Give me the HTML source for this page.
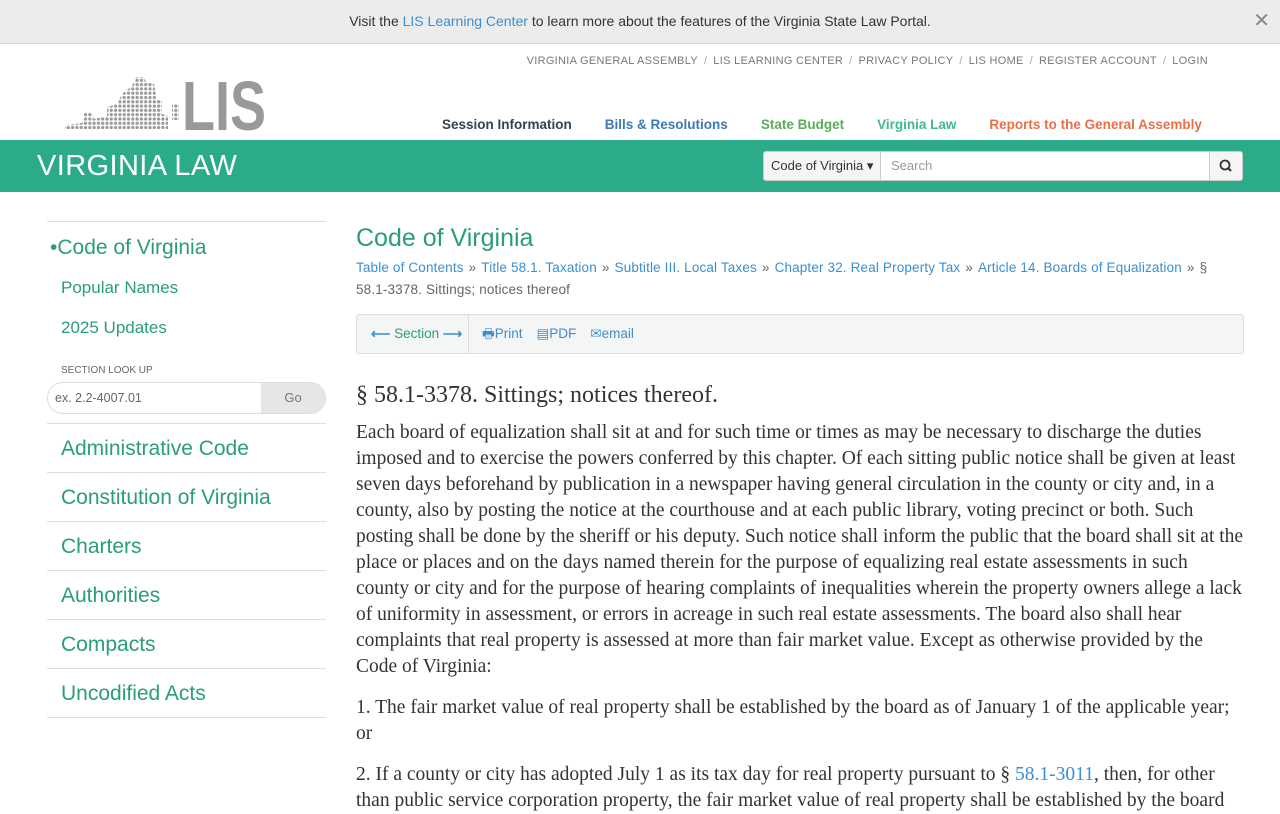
<!DOCTYPE html>
<html><head><meta charset="utf-8"><style>
*{box-sizing:border-box;margin:0;padding:0}
body{width:1280px;height:800px;overflow:hidden;font-family:"Liberation Sans",sans-serif;background:#fff;color:#333}
a{text-decoration:none}
.banner{height:44px;background:#ececec;border-bottom:1px solid #d6d6d6;text-align:center;font-size:14px;line-height:43px;color:#333;position:relative}
.banner a{color:#3a8fd0}
.banner .x{position:absolute;right:10px;top:0;font-size:20px;color:#888}
.top{position:absolute;top:55px;right:72px;font-size:11px;color:#777;letter-spacing:.3px}
.top span{margin:0 6px;color:#aaa}
.nav{position:absolute;top:117px;left:442px;font-size:13.5px;font-weight:bold;white-space:nowrap}
.nav a{margin-right:33px}
.band{position:absolute;top:140px;left:0;width:1280px;height:52px;background:#2cab8b}
.band h1{position:absolute;left:37px;top:10px;font-weight:normal;font-size:29px;color:#fff;letter-spacing:.4px}
.search{position:absolute;left:763px;top:11px;height:30px;width:480px;display:flex;border-radius:3px;overflow:hidden;background:#fff;border:1px solid #ccc}
.search .dd{width:117px;border-right:1px solid #ccc;background:#f5f5f5;font-size:13px;line-height:28px;padding-left:7px;color:#333}
.search .in{flex:1;font-size:13px;line-height:28px;padding-left:10px;color:#999}
.search .btn{width:33px;border-left:1px solid #ccc;background:#f5f5f5}
.side{position:absolute;left:47px;top:221px;width:279px}
.side .l{font-size:17px;color:#2a9d7a;padding-left:14px}
.big{display:block;border-bottom:1px solid #ddd;height:49px;line-height:49px;font-size:21px;color:#2a9d7a;padding-left:14px}
.main{position:absolute;left:356px;top:224px;width:888px}
.main h2{font-weight:normal;font-size:25px;color:#2a9d7a}
.bc{font-size:13.5px;color:#3a8fd0;line-height:22px;margin-top:4px;letter-spacing:.15px}
.bc span{color:#666;margin:0 5px}
.tb{margin-top:13px;height:40px;border:1px solid #ddd;border-radius:3px;background:#f4f5f5;font-size:13.5px;line-height:38px;display:flex}
.tb .s{width:112px;border-right:1px solid #ddd;padding-left:14px;color:#2a9d7a}
.tb .s b{color:#3a8fd0}
.tb .r{padding-left:13px;color:#3a8fd0}
.tb .r a{color:#3a8fd0;margin-right:14px}
h3{font-family:"Liberation Serif",serif;font-weight:normal;font-size:24px;margin-top:28px;color:#333}
p{font-family:"Liberation Serif",serif;font-size:19.5px;line-height:26px;margin-top:11px;color:#333}
p a{color:#3a8fd0}
</style></head><body>
<div class="banner">Visit the <a>LIS Learning Center</a> to learn more about the features of the Virginia State Law Portal.<span class="x">✕</span></div>
<svg style="position:absolute;left:62px;top:74px" width="206" height="58">
<defs><pattern id="d" width="4.3" height="4.3" patternUnits="userSpaceOnUse"><circle cx="2" cy="2" r="1.6" fill="#999"/></pattern></defs>
<polygon fill="url(#d)" points="3,55 3,51 20,49 22,38 30,38 32,45 45,42 45,33 55,30 60,20 70,12 74,3 82,3 84,8 92,10 95,25 100,27 100,40 106,42 106,55"/>
<rect x="110" y="30" width="7" height="16" fill="url(#d)"/>
<text x="120" y="56" font-family="Liberation Sans" font-weight="bold" font-size="70" fill="#999" textLength="84" lengthAdjust="spacingAndGlyphs">LIS</text>
</svg>
<div class="top">VIRGINIA GENERAL ASSEMBLY<span>/</span>LIS LEARNING CENTER<span>/</span>PRIVACY POLICY<span>/</span>LIS HOME<span>/</span>REGISTER ACCOUNT<span>/</span>LOGIN</div>
<div class="nav"><a style="color:#34434f">Session Information</a><a style="color:#3a7ab5">Bills &amp; Resolutions</a><a style="color:#5aad5a">State Budget</a><a style="color:#3cba92">Virginia Law</a><a style="color:#e5704b">Reports to the General Assembly</a></div>
<div class="band"><h1>VIRGINIA LAW</h1>
<div class="search"><div class="dd">Code of Virginia ▾</div><div class="in">Search</div><div class="btn"><svg width="33" height="28"><circle cx="15" cy="13" r="4.5" fill="none" stroke="#333" stroke-width="1.8"/><line x1="18.5" y1="16.5" x2="21" y2="19" stroke="#333" stroke-width="2"/></svg></div></div></div>
<div class="side">
<div style="border-top:1px solid #ddd;padding-top:14px"><div class="l" style="font-size:21px;padding-left:3px;height:28px">•Code of Virginia</div>
<div class="l" style="margin-top:14px;height:28px">Popular Names</div>
<div class="l" style="margin-top:12px;height:28px">2025 Updates</div>
<div style="font-size:10px;color:#666;margin:19px 0 6px 14px">SECTION LOOK UP</div>
<div style="display:flex;height:32px;border:1px solid #ddd;border-radius:16px;overflow:hidden;margin-bottom:9px"><div style="flex:1;font-size:12.5px;color:#666;line-height:30px;padding-left:7px">ex. 2.2-4007.01</div><div style="width:64px;background:#e6e6e6;color:#777;font-size:13px;text-align:center;line-height:30px">Go</div></div></div>
<div style="border-top:1px solid #ddd"></div>
<a class="big">Administrative Code</a><a class="big">Constitution of Virginia</a><a class="big">Charters</a><a class="big">Authorities</a><a class="big">Compacts</a><a class="big">Uncodified Acts</a>
</div>
<div class="main">
<h2>Code of Virginia</h2>
<div class="bc">Table of Contents<span>»</span>Title 58.1. Taxation<span>»</span>Subtitle III. Local Taxes<span>»</span>Chapter 32. Real Property Tax<span>»</span>Article 14. Boards of Equalization<span>»</span><span style="margin:0">§</span><br><span style="margin:0">58.1-3378. Sittings; notices thereof</span></div>
<div class="tb"><div class="s"><b>⟵</b> Section <b>⟶</b></div><div class="r"><a>🖶Print</a><a>▤PDF</a><a>✉email</a></div></div>
<h3>§ 58.1-3378. Sittings; notices thereof.</h3>
<p>Each board of equalization shall sit at and for such time or times as may be necessary to discharge the duties imposed and to exercise the powers conferred by this chapter. Of each sitting public notice shall be given at least seven days beforehand by publication in a newspaper having general circulation in the county or city and, in a county, also by posting the notice at the courthouse and at each public library, voting precinct or both. Such posting shall be done by the sheriff or his deputy. Such notice shall inform the public that the board shall sit at the place or places and on the days named therein for the purpose of equalizing real estate assessments in such county or city and for the purpose of hearing complaints of inequalities wherein the property owners allege a lack of uniformity in assessment, or errors in acreage in such real estate assessments. The board also shall hear complaints that real property is assessed at more than fair market value. Except as otherwise provided by the Code of Virginia:</p>
<p style="margin-top:15px">1. The fair market value of real property shall be established by the board as of January 1 of the applicable year; or</p>
<p style="margin-top:15px">2. If a county or city has adopted July 1 as its tax day for real property pursuant to § <a>58.1-3011</a>, then, for other than public service corporation property, the fair market value of real property shall be established by the board</p>
</div>
</body></html>
